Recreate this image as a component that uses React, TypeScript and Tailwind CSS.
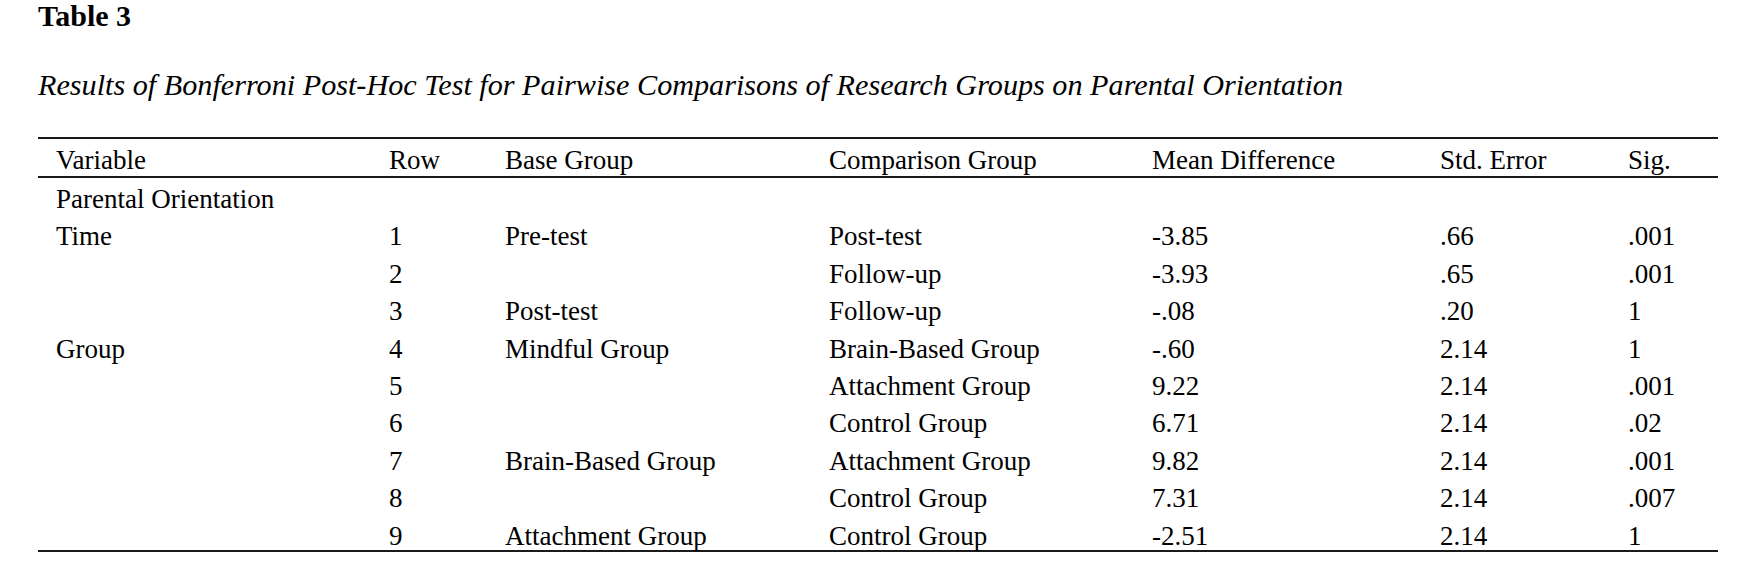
import React from "react";

type Row = {
  variable: string;
  row: string;
  base: string;
  comparison: string;
  mean: string;
  se: string;
  sig: string;
};

const rows: Row[] = [
  { variable: "Parental Orientation", row: "", base: "", comparison: "", mean: "", se: "", sig: "" },
  { variable: "Time", row: "1", base: "Pre-test", comparison: "Post-test", mean: "-3.85", se: ".66", sig: ".001" },
  { variable: "", row: "2", base: "", comparison: "Follow-up", mean: "-3.93", se: ".65", sig: ".001" },
  { variable: "", row: "3", base: "Post-test", comparison: "Follow-up", mean: "-.08", se: ".20", sig: "1" },
  { variable: "Group", row: "4", base: "Mindful Group", comparison: "Brain-Based Group", mean: "-.60", se: "2.14", sig: "1" },
  { variable: "", row: "5", base: "", comparison: "Attachment Group", mean: "9.22", se: "2.14", sig: ".001" },
  { variable: "", row: "6", base: "", comparison: "Control Group", mean: "6.71", se: "2.14", sig: ".02" },
  { variable: "", row: "7", base: "Brain-Based Group", comparison: "Attachment Group", mean: "9.82", se: "2.14", sig: ".001" },
  { variable: "", row: "8", base: "", comparison: "Control Group", mean: "7.31", se: "2.14", sig: ".007" },
  { variable: "", row: "9", base: "Attachment Group", comparison: "Control Group", mean: "-2.51", se: "2.14", sig: "1" },
];

const headers = ["Variable", "Row", "Base Group", "Comparison Group", "Mean Difference", "Std. Error", "Sig."];

const cols = "grid grid-cols-[333px_116px_324px_323px_288px_188px_1fr] pl-[18px]";

export default function App() {
  return (
    <div className="w-[1758px] h-[565px] bg-white text-black font-['Liberation_Serif','Times_New_Roman',serif] pl-[38px] overflow-hidden">
      <div className="pt-[1px] text-[30px] leading-[30px] font-bold">Table 3</div>
      <div className="mt-[39px] text-[30.2px] leading-[30px] italic">
        Results of Bonferroni Post-Hoc Test for Pairwise Comparisons of Research Groups on Parental Orientation
      </div>

      <div className="mt-[37px] w-[1680px]">
        <div className="h-[2px] bg-[#1a1a1a]" />
        <div className={`${cols} pt-[5px] text-[27px] leading-[32px]`}>
          {headers.map((h) => (
            <div key={h} className="whitespace-nowrap">{h}</div>
          ))}
        </div>
        <div className="h-[2px] bg-[#1a1a1a]" />

        <div className="pt-[3px] text-[27px] leading-[37.4px]">
          {rows.map((r, i) => (
            <div key={i} className={cols}>
              <div className="whitespace-nowrap">{r.variable}</div>
              <div>{r.row}</div>
              <div className="whitespace-nowrap">{r.base}</div>
              <div className="whitespace-nowrap">{r.comparison}</div>
              <div>{r.mean}</div>
              <div>{r.se}</div>
              <div>{r.sig}</div>
            </div>
          ))}
        </div>
        <div className="-mt-[5px] h-[2px] bg-[#1a1a1a]" />
      </div>
    </div>
  );
}
